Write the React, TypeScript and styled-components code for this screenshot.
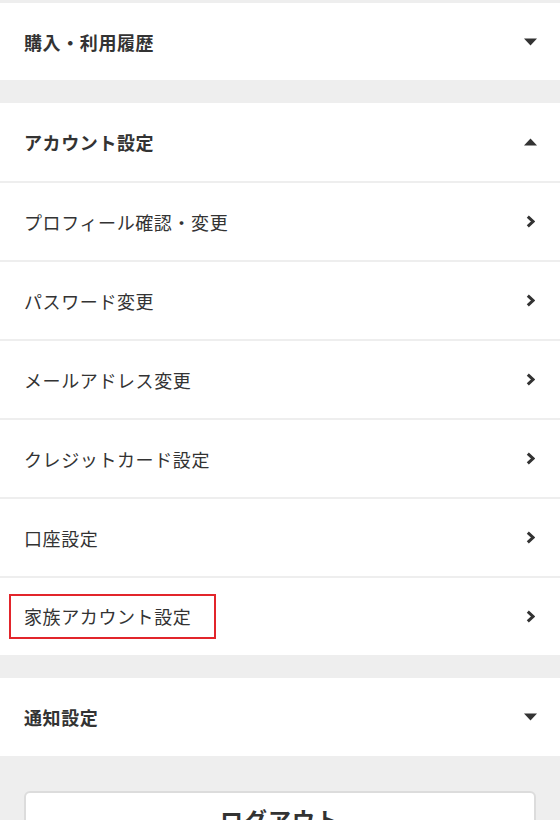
import styled, { createGlobalStyle } from "styled-components";

const GlobalStyle = createGlobalStyle`
  html, body {
    margin: 0;
    padding: 0;
    background: #eeeeee;
  }
  body {
    font-family: "Noto Sans CJK JP", "Noto Sans", sans-serif;
    color: #333;
  }
`;

const Page = styled.div`
  width: 560px;
  padding-top: 3px;
  display: flex;
  flex-direction: column;
  gap: 23px;
  box-sizing: border-box;
`;

const Section = styled.section`
  background: #fff;
  display: flex;
  flex-direction: column;
`;

const Header = styled.div<{ $first?: boolean }>`
  height: ${({ $first }) => ($first ? "77px" : "78px")};
  padding: 0 23px 0 24px;
  display: flex;
  align-items: center;
  justify-content: space-between;
  font-size: 18px;
  font-weight: 700;
  letter-spacing: 0.6px;
  color: #333;
`;

const Item = styled.div`
  height: 77px;
  border-top: 2px solid #eeeeee;
  padding: 0 25px 0 24px;
  display: flex;
  align-items: center;
  justify-content: space-between;
  font-size: 18px;
  font-weight: 400;
  letter-spacing: 0.6px;
  color: #333;
`;

const Label = styled.span<{ $highlight?: boolean }>`
  ${({ $highlight }) =>
    $highlight
      ? `
    margin-left: -15px;
    padding: 7px 23px 8px 13px;
    border: 2px solid #e2252b;
  `
      : ""}
`;

const Footer = styled.div`
  padding: 12px 24px 0;
`;

const LogoutButton = styled.button`
  width: 100%;
  height: 70px;
  background: #fff;
  border: 2px solid #dcdcdc;
  border-radius: 6px;
  display: flex;
  justify-content: center;
  align-items: flex-start;
  padding-top: 9px;
  font-family: "Noto Sans CJK JP", sans-serif;
  font-size: 23px;
  font-weight: 700;
  letter-spacing: 1px;
  color: #333;
`;

const Caret = ({ up }: { up?: boolean }) => (
  <svg width="13" height="8" viewBox="0 0 13 8">
    <polygon points={up ? "0,7.5 6.5,0.5 13,7.5" : "0,0.5 13,0.5 6.5,7.5"} fill="#333" />
  </svg>
);

const Chevron = () => (
  <svg width="9" height="13" viewBox="0 0 9 13">
    <path d="M1.8 1.6 L7 6.5 L1.8 11.4" fill="none" stroke="#333" strokeWidth="3" />
  </svg>
);

const accountItems = [
  "プロフィール確認・変更",
  "パスワード変更",
  "メールアドレス変更",
  "クレジットカード設定",
  "口座設定",
  "家族アカウント設定",
];

const App = () => {
  return (
    <Page>
      <GlobalStyle />
      <Section>
        <Header $first>
          購入・利用履歴
          <Caret />
        </Header>
      </Section>
      <Section>
        <Header>
          アカウント設定
          <Caret up />
        </Header>
        {accountItems.map((label, i) => (
          <Item key={label}>
            <Label $highlight={i === accountItems.length - 1}>{label}</Label>
            <Chevron />
          </Item>
        ))}
      </Section>
      <Section>
        <Header>
          通知設定
          <Caret />
        </Header>
      </Section>
      <Footer>
        <LogoutButton>ログアウト</LogoutButton>
      </Footer>
    </Page>
  );
};

export default App;
